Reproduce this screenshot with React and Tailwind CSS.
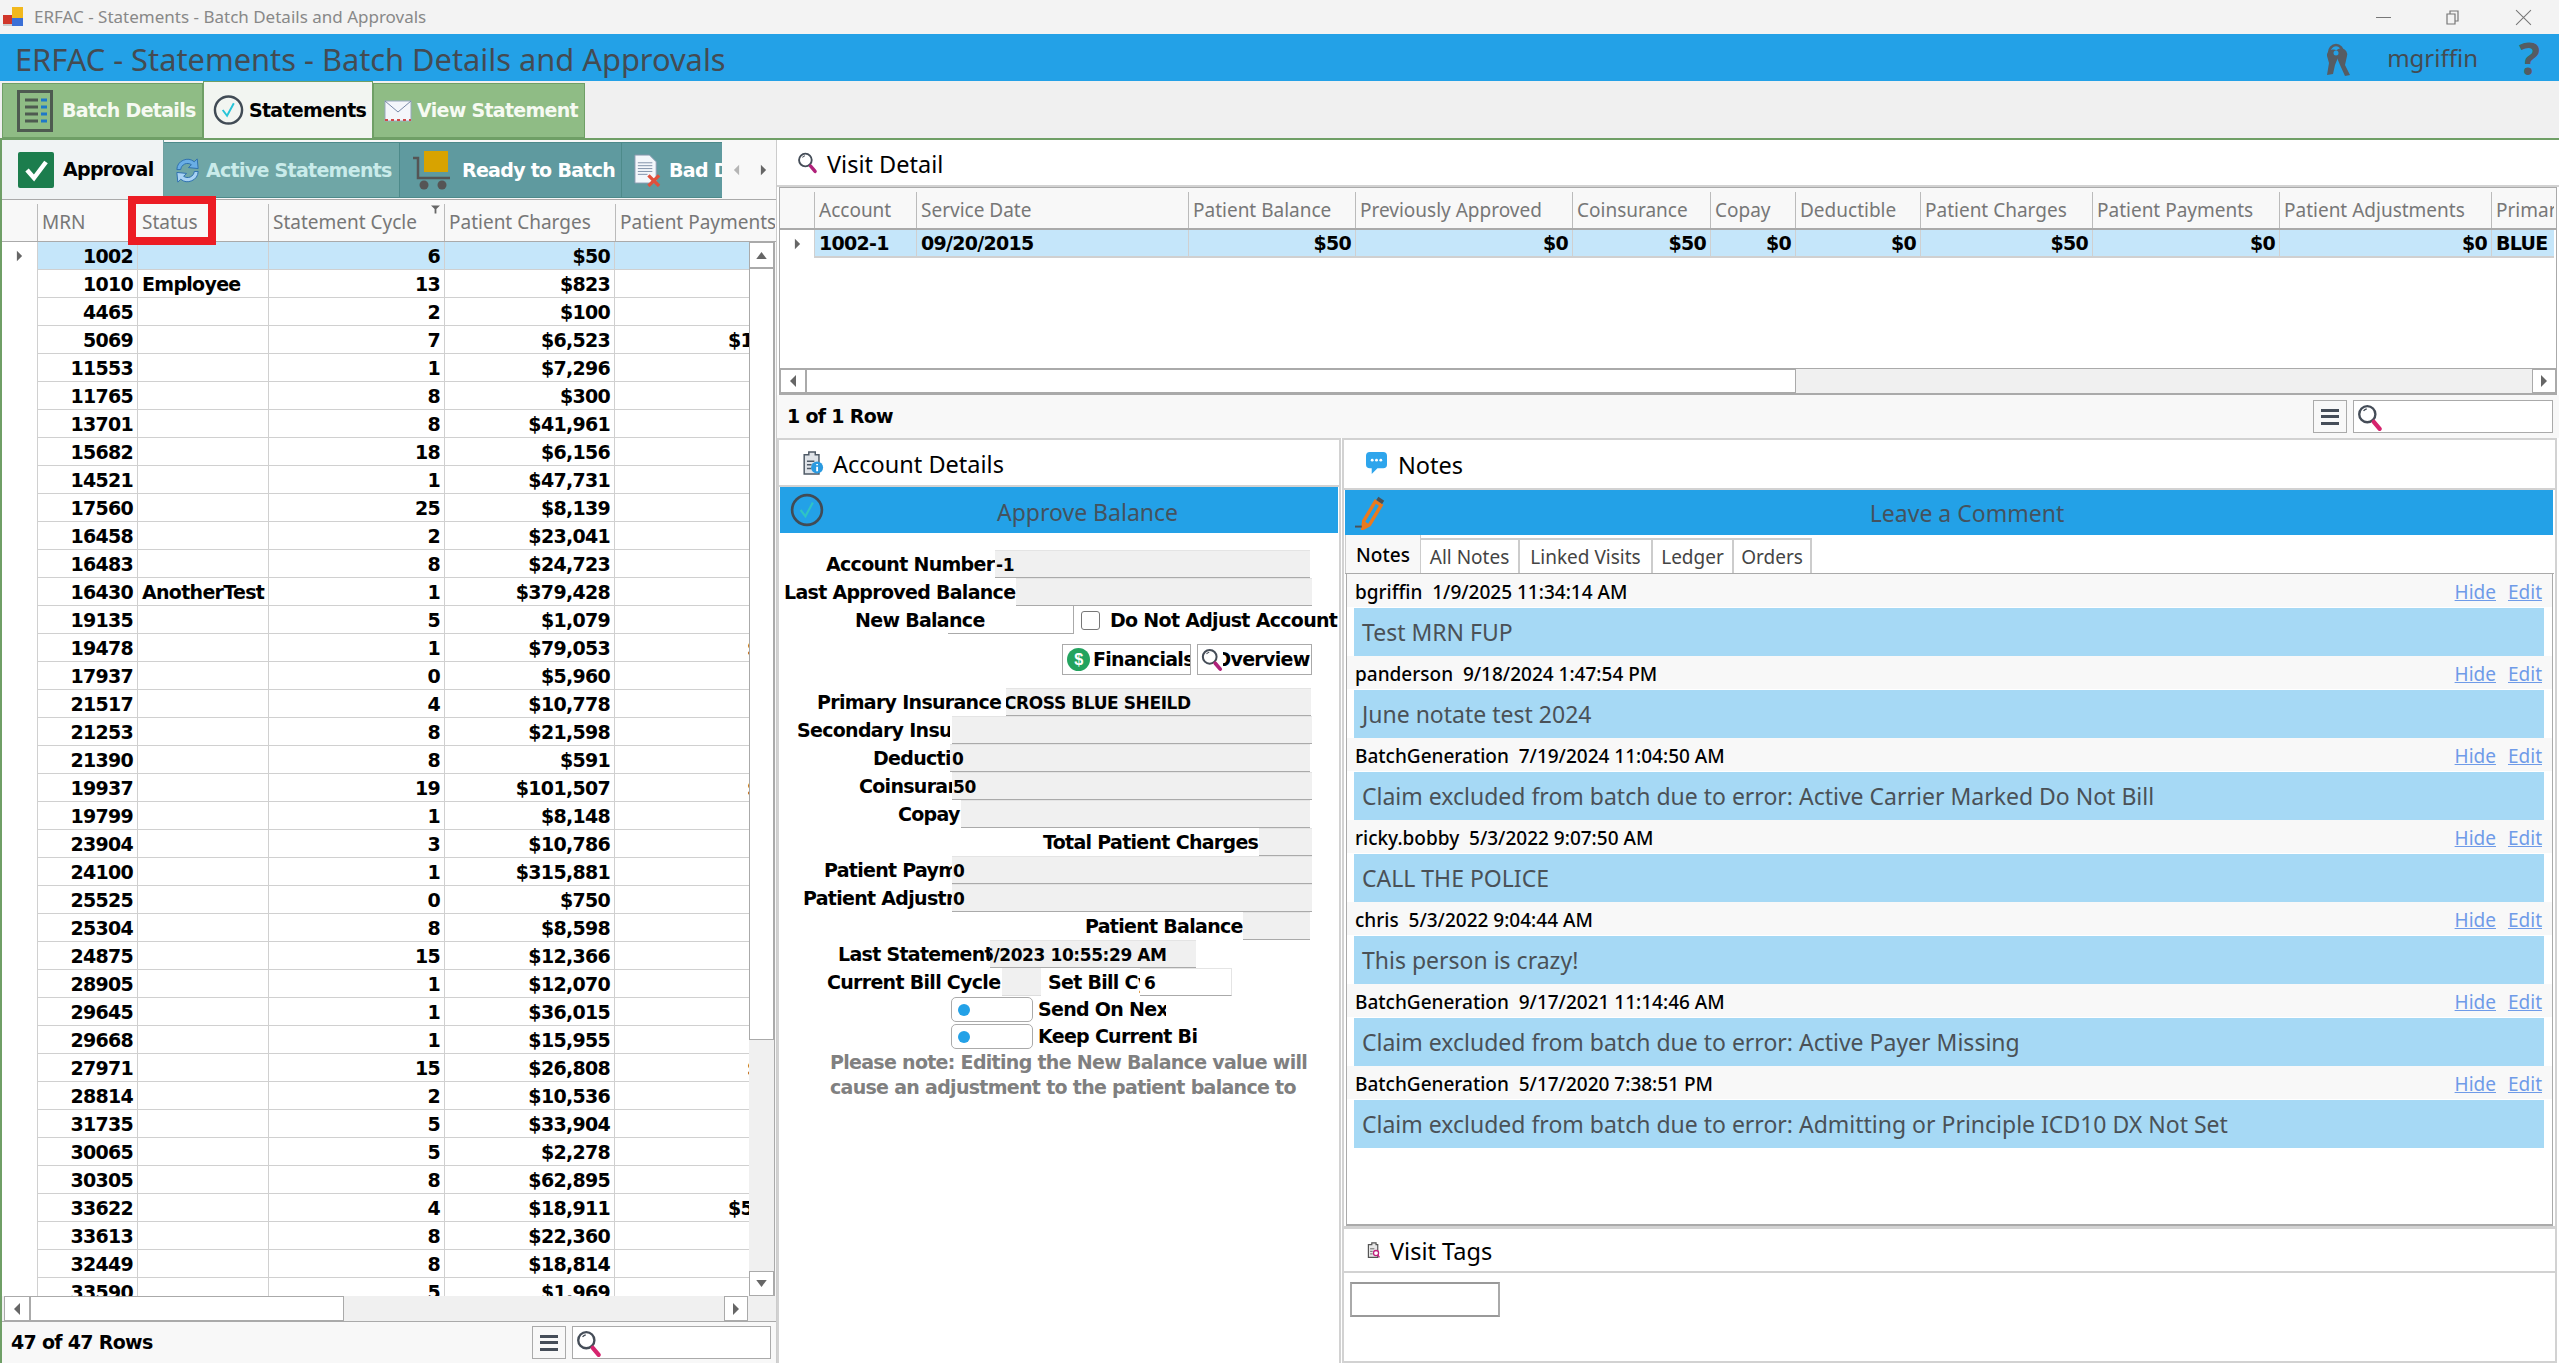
import React from 'react';

const bold = "font-['DejaVu_Sans',sans-serif] font-bold text-[19px] tracking-[-0.7px]";

const rows = [
  ['1002', '', '6', '$50', ''],
  ['1010', 'Employee', '13', '$823', ''],
  ['4465', '', '2', '$100', ''],
  ['5069', '', '7', '$6,523', '$1,240'],
  ['11553', '', '1', '$7,296', ''],
  ['11765', '', '8', '$300', ''],
  ['13701', '', '8', '$41,961', ''],
  ['15682', '', '18', '$6,156', ''],
  ['14521', '', '1', '$47,731', ''],
  ['17560', '', '25', '$8,139', ''],
  ['16458', '', '2', '$23,041', ''],
  ['16483', '', '8', '$24,723', ''],
  ['16430', 'AnotherTest', '1', '$379,428', ''],
  ['19135', '', '5', '$1,079', ''],
  ['19478', '', '1', '$79,053', '$794'],
  ['17937', '', '0', '$5,960', ''],
  ['21517', '', '4', '$10,778', ''],
  ['21253', '', '8', '$21,598', ''],
  ['21390', '', '8', '$591', ''],
  ['19937', '', '19', '$101,507', '$612'],
  ['19799', '', '1', '$8,148', ''],
  ['23904', '', '3', '$10,786', ''],
  ['24100', '', '1', '$315,881', ''],
  ['25525', '', '0', '$750', ''],
  ['25304', '', '8', '$8,598', ''],
  ['24875', '', '15', '$12,366', ''],
  ['28905', '', '1', '$12,070', ''],
  ['29645', '', '1', '$36,015', ''],
  ['29668', '', '1', '$15,955', ''],
  ['27971', '', '15', '$26,808', '$350'],
  ['28814', '', '2', '$10,536', ''],
  ['31735', '', '5', '$33,904', ''],
  ['30065', '', '5', '$2,278', ''],
  ['30305', '', '8', '$62,895', ''],
  ['33622', '', '4', '$18,911', '$5,120'],
  ['33613', '', '8', '$22,360', ''],
  ['32449', '', '8', '$18,814', ''],
  ['33590', '', '5', '$1,969', ''],
];

const visitCols = [
  ['Account', '1002-1', 'w-[102px]', 'text-left'],
  ['Service Date', '09/20/2015', 'w-[272px]', 'text-left'],
  ['Patient Balance', '$50', 'w-[167px]', 'text-right'],
  ['Previously Approved', '$0', 'w-[217px]', 'text-right'],
  ['Coinsurance', '$50', 'w-[138px]', 'text-right'],
  ['Copay', '$0', 'w-[85px]', 'text-right'],
  ['Deductible', '$0', 'w-[125px]', 'text-right'],
  ['Patient Charges', '$50', 'w-[172px]', 'text-right'],
  ['Patient Payments', '$0', 'w-[187px]', 'text-right'],
  ['Patient Adjustments', '$0', 'w-[212px]', 'text-right'],
  ['Primary', 'BLUE', 'w-[63px]', 'text-left'],
];

const notes = [
  ['bgriffin', '1/9/2025 11:34:14 AM', 'Test MRN FUP'],
  ['panderson', '9/18/2024 1:47:54 PM', 'June notate test 2024'],
  ['BatchGeneration', '7/19/2024 11:04:50 AM', 'Claim excluded from batch due to error: Active Carrier Marked Do Not Bill'],
  ['ricky.bobby', '5/3/2022 9:07:50 AM', 'CALL THE POLICE'],
  ['chris', '5/3/2022 9:04:44 AM', 'This person is crazy!'],
  ['BatchGeneration', '9/17/2021 11:14:46 AM', 'Claim excluded from batch due to error: Active Payer Missing'],
  ['BatchGeneration', '5/17/2020 7:38:51 PM', 'Claim excluded from batch due to error: Admitting or Principle ICD10 DX Not Set'],
];

const noteTabs = [
  ['All Notes', 'w-[99px]'],
  ['Linked Visits', 'w-[133px]'],
  ['Ledger', 'w-[81px]'],
  ['Orders', 'w-[78px]'],
];

// little triangle used by the scrollbars and row headers
function Arrow({ dir, className = 'w-[8px] h-[12px]' }) {
  const d = {
    left: 'M7 0 V12 L1 6 Z',
    right: 'M1 0 V12 L7 6 Z',
  };
  if (dir === 'up' || dir === 'down') {
    return (
      <svg viewBox="0 0 12 8" className="w-[11px] h-[7px]">
        <path d={dir === 'up' ? 'M0 8 H12 L6 0 Z' : 'M0 0 H12 L6 8 Z'} fill="#666" />
      </svg>
    );
  }
  return (
    <svg viewBox="0 0 8 12" className={className}>
      <path d={d[dir]} fill="#666" />
    </svg>
  );
}

function Magnifier({ className, handle = '#d6246e' }) {
  return (
    <svg viewBox="0 0 24 26" className={className}>
      <circle cx="9.5" cy="9.5" r="7.5" fill="#fff" stroke="#454d58" strokeWidth="2.2" />
      <path d="M6 6.5 A5 5 0 0 1 9 4.5" fill="none" stroke="#454d58" strokeWidth="1.2" />
      <path d="M15.5 16.5 L21 23" stroke={handle} strokeWidth="4" strokeLinecap="round" />
    </svg>
  );
}

function CheckCircle({ className, stroke = '#414b55', check = '#27c4d8', fill = 'none' }) {
  return (
    <svg viewBox="0 0 32 32" className={className}>
      <circle cx="16" cy="16" r="14" fill={fill} stroke={stroke} strokeWidth="2.5" />
      <path d="M10 16 L14.5 22 L21.5 9" fill="none" stroke={check} strokeWidth="2" />
    </svg>
  );
}

function MenuBox({ search }) {
  return (
    <div className="flex gap-[6px] items-stretch h-full">
      <div className="w-[34px] border border-[#aaa] flex flex-col items-center justify-center gap-[3.5px] bg-[#f8f8f8]">
        <div className="w-[18px] h-[3px] bg-[#454d58]" />
        <div className="w-[18px] h-[3px] bg-[#454d58]" />
        <div className="w-[18px] h-[3px] bg-[#454d58]" />
      </div>
      <div className={`${search} border border-[#aaa] bg-white pl-[3px] pt-[3px]`}>
        <Magnifier className="w-[26px] h-[28px]" />
      </div>
    </div>
  );
}

function ScrollH({ thumbClass, className }) {
  return (
    <div className={`flex items-stretch bg-[#f0f0f0] ${className}`}>
      <div className="w-[26px] bg-white border border-[#aaa] flex items-center justify-center"><Arrow dir="left" /></div>
      <div className={`${thumbClass} bg-white border border-[#aaa]`} />
      <div className="flex-1" />
      <div className="w-[24px] bg-white border border-[#aaa] flex items-center justify-center"><Arrow dir="right" /></div>
    </div>
  );
}

function SectionTitle({ icon, children, className = '' }) {
  return (
    <div className={`flex items-center bg-white text-[23.5px] text-black border-b-2 border-[#d2d2d2] pt-[4px] ${className}`}>
      {icon}
      <span>{children}</span>
    </div>
  );
}

function Grid() {
  return (
    <div className="flex-1 flex flex-col min-h-0 relative">
      <div className="h-[43px] pt-[4px] flex bg-[#f8f8f8] border-y border-[#aaa] text-[19px] text-[#777] whitespace-nowrap overflow-hidden shrink-0">
        <div className="w-[35px] shrink-0" />
        <div className="w-[100px] shrink-0 border-l border-[#bbb] pl-[4px] flex items-center">MRN</div>
        <div className="w-[131px] shrink-0 pl-[5px] flex items-center">Status</div>
        <div className="w-[176px] shrink-0 border-l border-[#bbb] pl-[4px] flex items-center relative">
          Statement Cycle
          <svg viewBox="0 0 10 9" className="absolute right-[4px] top-[1px] w-[9px] h-[9px]">
            <path d="M0 0 H10 L6 4 V9 H4 V4 Z" fill="#666" />
          </svg>
        </div>
        <div className="w-[171px] shrink-0 border-l border-[#bbb] pl-[4px] flex items-center">Patient Charges</div>
        <div className="w-[160px] shrink-0 border-l border-[#bbb] pl-[4px] flex items-center overflow-hidden">Patient Payments</div>
      </div>

      <div className="absolute left-[126px] top-[-3px] w-[88px] h-[49px] border-[8px] border-[#ec1c24]" />

      <div className="flex-1 flex min-h-0">
        <div className={`w-[747px] overflow-hidden text-black ${bold}`}>
          {rows.map((r, i) => (
            <div key={r[0]} className="flex h-[28px] leading-[28px] whitespace-nowrap">
              <div className="w-[35px] shrink-0 flex items-center justify-center bg-white">
                {i === 0 && <Arrow dir="right" className="w-[7px] h-[14px]" />}
              </div>
              <div className={`flex shrink-0 border-b border-l border-[#d0d0d0] ${i === 0 ? 'bg-[#c5e6fa]' : 'bg-white'}`}>
                <div className="w-[100px] text-right pr-[4px] border-r border-[#d0d0d0]">{r[0]}</div>
                <div className="w-[131px] pl-[4px] border-r border-[#d0d0d0]">{r[1]}</div>
                <div className="w-[176px] text-right pr-[4px] border-r border-[#d0d0d0]">{r[2]}</div>
                <div className="w-[170px] text-right pr-[4px] border-r border-[#d0d0d0]">{r[3]}</div>
                <div className="w-[186px] text-right pr-[4px]">{r[4]}</div>
              </div>
            </div>
          ))}
        </div>
        <div className="w-[26px] shrink-0 flex flex-col bg-[#f0f0f0] border-r border-[#aaa]">
          <div className="h-[26px] bg-white border border-[#aaa] flex items-center justify-center"><Arrow dir="up" /></div>
          <div className="h-[772px] bg-white border border-[#aaa]" />
          <div className="flex-1" />
          <div className="h-[25px] bg-white border border-[#aaa] flex items-center justify-center"><Arrow dir="down" /></div>
        </div>
      </div>
      <ScrollH thumbClass="w-[314px]" className="h-[26px] shrink-0 pl-[2px] pr-[28px] border-b border-[#aaa]" />
    </div>
  );
}

function LeftPanel() {
  return (
    <div className="w-[776px] shrink-0 flex flex-col border-l-2 border-[#6f9f66] bg-[#f8f8f8]">
      <div className="h-[59px] shrink-0 flex items-stretch">
        <div className={`w-[720px] flex overflow-hidden whitespace-nowrap ${bold}`}>
          <div className="w-[162px] shrink-0 flex items-center bg-[#f0f3f4] border-r border-[#6f9f9f] text-black pl-[16px] gap-[9px]">
            <svg viewBox="0 0 36 36" className="w-[36px] h-[36px]">
              <rect width="36" height="36" rx="2" fill="#1c7d4d" />
              <path d="M9 18 L16 26 L28 10" fill="none" stroke="#fff" strokeWidth="4.5" />
            </svg>
            <span>Approval</span>
          </div>
          <div className="w-[236px] shrink-0 mt-[2px] mb-[1px] flex items-center bg-[#6fa6a6] border-y border-r border-[#4d8a8a] text-[#c9ebea] pl-[8px] gap-[3px]">
            <svg viewBox="0 0 32 32" className="w-[31px] h-[31px]">
              <path d="M5 15 A11 11 0 0 1 23 7 L26 4 L27 14 L17 13 L20 10 A7 7 0 0 0 9 15 Z" fill="#6aaee6" stroke="#2d6fae" strokeWidth="1" />
              <path d="M27 17 A11 11 0 0 1 9 25 L6 28 L5 18 L15 19 L12 22 A7 7 0 0 0 23 17 Z" fill="#a8d2f4" stroke="#2d6fae" strokeWidth="1" />
            </svg>
            <span>Active Statements</span>
          </div>
          <div className="w-[222px] shrink-0 mt-[2px] mb-[1px] flex items-center bg-[#5f9a9f] border-y border-r border-[#4d8a8a] text-white pl-[12px] gap-[10px]">
            <svg viewBox="0 0 40 40" className="w-[40px] h-[40px]">
              <rect x="12" y="1" width="24" height="21" fill="#d8a300" />
              <path d="M1 8 H6 V28 H38" fill="none" stroke="#555" strokeWidth="2.5" />
              <circle cx="12" cy="35" r="4.5" fill="#555" />
              <circle cx="30" cy="35" r="4.5" fill="#555" />
            </svg>
            <span>Ready to Batch</span>
          </div>
          <div className="w-[100px] shrink-0 mt-[2px] mb-[1px] flex items-center bg-[#5f9a9f] border-y border-[#4d8a8a] text-white pl-[12px] gap-[8px]">
            <svg viewBox="0 0 28 34" className="w-[27px] h-[33px] shrink-0">
              <path d="M1 1 H16 L23 8 V30 H1 Z" fill="#f4f7fb" stroke="#8a9ab0" />
              <path d="M4 9 H19 M4 12 H19 M4 15 H19 M4 18 H19 M4 21 H14" stroke="#8090a8" strokeWidth="1" />
              <path d="M15 22 L26 33 M26 22 L15 33" stroke="#e0503c" strokeWidth="3.5" />
            </svg>
            <span>Bad Debt</span>
          </div>
        </div>
        <div className="flex-1 flex items-center bg-[#f8f8f8] pl-[11px] gap-[20px]">
          <svg viewBox="0 0 8 12" className="w-[7px] h-[14px]"><path d="M7 0 V12 L1 6 Z" fill="#b5b5b5" /></svg>
          <Arrow dir="right" className="w-[7px] h-[14px]" />
        </div>
      </div>
      <Grid />
      <div className="h-[41px] shrink-0 flex items-center justify-between pl-[9px] pr-[5px] py-[4px] bg-[#f8f8f8]">
        <span className={`text-black ${bold}`}>47 of 47 Rows</span>
        <MenuBox search="w-[199px]" />
      </div>
    </div>
  );
}

function VisitDetail() {
  return (
    <>
      <SectionTitle
        className="h-[47px] shrink-0 pl-[20px] gap-[9px]"
        icon={<Magnifier className="w-[21px] h-[22px] -mt-[3px]" handle="#b0217a" />}
      >
        Visit Detail
      </SectionTitle>
      <div className="h-[208px] shrink-0 flex flex-col mx-[2px] border border-[#aaa] border-b-2">
        <div className="h-[42px] pt-[4px] shrink-0 flex bg-[#f8f8f8] border-b-2 border-[#aaa] text-[19px] text-[#777] whitespace-nowrap">
          <div className="w-[34px] shrink-0" />
          {visitCols.map(c => (
            <div key={c[0]} className={`${c[2]} shrink-0 border-l border-[#bbb] pl-[4px] flex items-center overflow-hidden`}>{c[0]}</div>
          ))}
        </div>
        <div className={`h-[28px] shrink-0 flex text-black leading-[27px] whitespace-nowrap ${bold}`}>
          <div className="w-[34px] shrink-0 flex items-center justify-center bg-white">
            <Arrow dir="right" className="w-[7px] h-[14px]" />
          </div>
          {visitCols.map(c => (
            <div key={c[0]} className={`${c[2]} ${c[3]} shrink-0 bg-[#c5e6fa] border-l border-b-2 border-[#d0d0d0] px-[4px]`}>{c[1]}</div>
          ))}
        </div>
        <div className="flex-1 bg-white" />
        <ScrollH thumbClass="w-[990px]" className="h-[25px] shrink-0 border-t border-[#aaa]" />
      </div>
      <div className="h-[43px] shrink-0 flex items-center justify-between pl-[10px] pr-[6px] py-[5px] bg-[#f8f8f8]">
        <span className={`text-black ${bold}`}>1 of 1 Row</span>
        <MenuBox search="w-[200px]" />
      </div>
    </>
  );
}

function FormRow({ label, labelClass, fieldClass, value }) {
  return (
    <div className={`h-[28px] flex items-stretch whitespace-nowrap text-black leading-[28px] ${bold}`}>
      <div className={`relative z-10 bg-white overflow-hidden shrink-0 ${labelClass}`}>{label}</div>
      <div className={`shrink-0 bg-[#f0f0f0] border-b border-[#aaa] border-t border-t-[#e4e4e4] overflow-hidden text-[17px] tracking-[-0.4px] ${fieldClass}`}>
        {value}
      </div>
    </div>
  );
}

function AccountDetails() {
  return (
    <div className="w-[564px] shrink-0 flex flex-col border-t-2 border-x-2 border-[#d2d2d2] bg-white">
      <SectionTitle
        className="h-[47px] shrink-0 pl-[22px] gap-[9px]"
        icon={
          <svg viewBox="0 0 24 26" className="w-[23px] h-[24px] -mt-[3px]">
            <path d="M3 4 H8 V1 H15 V4 H19 V25 H3 Z" fill="#dfe3e8" stroke="#4f5a66" strokeWidth="1.6" />
            <path d="M6 11 H14 M6 15 H11 M6 19 H11" stroke="#4f5a66" strokeWidth="1.6" />
            <circle cx="17" cy="18" r="6.5" fill="#2a9ae0" />
            <path d="M17 17 V22 M17 14 V15.5" stroke="#fff" strokeWidth="2" />
          </svg>
        }
      >
        Account Details
      </SectionTitle>
      <div className="h-[46px] shrink-0 bg-[#23a1e7] flex items-center pl-[10px] pt-[4px] text-[23px] text-[#44525e] mx-[1px]">
        <CheckCircle className="w-[34px] h-[34px] shrink-0 -mt-[4px]" stroke="#414b55" check="#2fc4c4" />
        <span className="ml-[173px]">Approve Balance</span>
      </div>

      <div className="pt-[17px] flex flex-col">
        <FormRow label="Account Number" labelClass="w-[216px] pl-[47px]" fieldClass="ml-[-47px] w-[362px] pl-[48px]" value="-1" />
        <FormRow label="Last Approved Balance" labelClass="w-[237px] pl-[5px]" fieldClass="ml-[-66px] w-[362px]" value="" />
        <div className={`h-[28px] flex items-center whitespace-nowrap text-black ${bold}`}>
          <div className="w-[169px] pl-[76px] shrink-0">New Balance</div>
          <div className="w-[126px] h-full border-b border-r border-[#aaa] shrink-0" />
          <div className="w-[19px] h-[19px] ml-[7px] border border-[#777] rounded-[3px] shrink-0" />
          <div className="ml-[10px] w-[229px] overflow-hidden">Do Not Adjust Account</div>
        </div>
        <div className={`h-[31px] mt-[10px] mb-[13px] flex pl-[283px] gap-[6px] text-black whitespace-nowrap ${bold}`}>
          <div className="w-[129px] border border-[#aaa] flex items-center pl-[4px] gap-[3px] overflow-hidden">
            <svg viewBox="0 0 24 24" className="w-[23px] h-[23px] shrink-0">
              <circle cx="12" cy="12" r="12" fill="#23a35f" />
              <text x="12" y="18" textAnchor="middle" fontSize="17" fontWeight="700" fill="#fff" fontFamily="Liberation Sans">$</text>
            </svg>
            <span>Financials</span>
          </div>
          <div className="w-[115px] border border-[#aaa] flex items-center pl-[3px] overflow-hidden">
            <Magnifier className="w-[22px] h-[24px] shrink-0 relative z-10 bg-white" handle="#b0217a" />
            <span className="ml-[-8px]">Overview</span>
          </div>
        </div>
        <FormRow label="Primary Insurance" labelClass="w-[227px] pl-[38px]" fieldClass="ml-[-56px] w-[361px] pl-[54px]" value="CROSS BLUE SHEILD" />
        <FormRow label="Secondary Insurance" labelClass="w-[171px] pl-[18px]" fieldClass="ml-[2px] w-[360px]" value="" />
        <FormRow label="Deductible" labelClass="w-[171px] pl-[94px]" fieldClass="w-[360px] pl-[2px]" value="0" />
        <FormRow label="Coinsurance" labelClass="w-[173px] pl-[80px]" fieldClass="w-[360px] pl-[1px]" value="50" />
        <FormRow label="Copay" labelClass="w-[182px] pl-[119px]" fieldClass="ml-[-11px] w-[360px]" value="" />
        <FormRow label="Total Patient Charges" labelClass="w-[480px] pl-[264px]" fieldClass="ml-[-309px] w-[362px]" value="" />
        <FormRow label="Patient Payments" labelClass="w-[173px] pl-[45px]" fieldClass="w-[360px] pl-[1px]" value="0" />
        <FormRow label="Patient Adjustments" labelClass="w-[173px] pl-[24px]" fieldClass="w-[360px] pl-[1px]" value="0" />
        <FormRow label="Patient Balance" labelClass="w-[464px] pl-[306px]" fieldClass="ml-[-293px] w-[360px]" value="" />
        <FormRow label="Last Statement Date" labelClass="w-[211px] pl-[59px]" fieldClass="ml-[-40px] w-[246px] pl-[32px]" value="6/2023 10:55:29 AM" />
        <div className={`h-[28px] flex whitespace-nowrap text-black leading-[28px] ${bold}`}>
          <div className="w-[223px] pl-[48px] shrink-0">Current Bill Cycle</div>
          <div className="w-[39px] bg-[#f0f0f0] border-b border-[#ddd] shrink-0" />
          <div className="w-[92px] ml-[7px] overflow-hidden shrink-0">Set Bill Cycle</div>
          <div className="w-[92px] pl-[4px] border-y border-r border-[#e4e4e4] border-b-[#aaa] text-[17px]">6</div>
        </div>
        <div className={`h-[27px] flex items-center whitespace-nowrap text-black pl-[172px] ${bold}`}>
          <div className="w-[82px] h-[25px] rounded-[5px] border border-[#aaa] flex items-center pl-[6px] shrink-0">
            <div className="w-[12px] h-[12px] rounded-full bg-[#23a1e7]" />
          </div>
          <div className="ml-[5px] w-[128px] overflow-hidden">Send On Next</div>
        </div>
        <div className={`h-[27px] flex items-center whitespace-nowrap text-black pl-[172px] ${bold}`}>
          <div className="w-[82px] h-[25px] rounded-[5px] border border-[#aaa] flex items-center pl-[6px] shrink-0">
            <div className="w-[12px] h-[12px] rounded-full bg-[#23a1e7]" />
          </div>
          <div className="ml-[5px] w-[160px] overflow-hidden">Keep Current Bill Cycle</div>
        </div>
        <div className={`pl-[51px] text-[#808080] leading-[24.5px] w-[558px] ${bold}`}>
          Please note: Editing the New Balance value will cause an adjustment to the patient balance to
        </div>
      </div>
    </div>
  );
}

function NoteItem({ note }) {
  return (
    <div className="h-[82px] shrink-0 flex flex-col">
      <div className="h-[33px] pt-[3px] flex items-center justify-between bg-[#f8f8f8] pl-[8px] pr-[10px] text-[19px] whitespace-nowrap">
        <span className="font-medium text-black">{note[0]}&nbsp;&nbsp;{note[1]}</span>
        <span className="flex gap-[12px] text-[#6f9be8] underline">
          <span>Hide</span>
          <span>Edit</span>
        </span>
      </div>
      <div className="h-[48px] mt-[1px] ml-[7px] mr-[8px] bg-[#a6d9f5] flex items-center pl-[8px] text-[23px] text-[#4a5157] whitespace-nowrap">
        {note[2]}
      </div>
    </div>
  );
}

function Notes() {
  return (
    <div className="flex-1 flex flex-col min-w-0 bg-white border-t-2 border-x-2 border-[#d2d2d2] ml-[1px] mr-[2px]">
      <SectionTitle
        className="h-[50px] shrink-0 pl-[22px] gap-[11px]"
        icon={
          <svg viewBox="0 0 22 24" className="w-[21px] h-[23px] -mt-[6px]">
            <path d="M4 0 H18 A4 4 0 0 1 22 4 V13 A4 4 0 0 1 18 17 H12 L6 23 V17 H4 A4 4 0 0 1 0 13 V4 A4 4 0 0 1 4 0 Z" fill="#2ea5ec" />
            <circle cx="6.5" cy="8.5" r="1.5" fill="#fff" />
            <circle cx="11" cy="8.5" r="1.5" fill="#fff" />
            <circle cx="15.5" cy="8.5" r="1.5" fill="#fff" />
          </svg>
        }
      >
        Notes
      </SectionTitle>
      <div className="h-[45px] shrink-0 relative bg-[#23a1e7] flex items-center justify-center pt-[2px] pl-[36px] text-[23px] text-[#44525e] ml-[1px] mr-[2px]">
        <svg viewBox="0 0 34 34" className="absolute left-[10px] top-[6px] w-[33px] h-[34px]">
          <path d="M21 5 L27 9 L15 29 L8 33 L9 25 Z" fill="none" stroke="#ea7a1e" strokeWidth="3.5" />
          <path d="M9 25 L15 29 L8 33 Z" fill="#ea7a1e" />
          <path d="M23 2 L29 6" stroke="#4a5157" strokeWidth="4" />
          <path d="M0 31 H7" stroke="#4a5157" strokeWidth="2" />
        </svg>
        Leave a Comment
      </div>
      <div className="h-[39px] shrink-0 flex text-[19px] whitespace-nowrap border-b border-[#aaa] mx-[1px]">
        <div className="w-[76px] pt-[2px] bg-[#f8f8f8] border-x border-[#ccc] font-medium text-black flex items-center justify-center">Notes</div>
        {noteTabs.map(t => (
          <div key={t[0]} className={`${t[1]} mt-[3px] pt-[1px] border-t-2 border-r-2 border-[#ccc] text-[#444] flex items-center justify-center`}>{t[0]}</div>
        ))}
      </div>
      <div className="h-[652px] shrink-0 mx-[2px] border-x border-b-2 border-[#aaa] flex flex-col overflow-hidden">
        {notes.map((n, i) => <NoteItem key={i} note={n} />)}
      </div>
      <div className="h-[3px] shrink-0 bg-[#d2d2d2]" />
      <SectionTitle
        className="h-[44px] shrink-0 pl-[22px] gap-[9px]"
        icon={
          <svg viewBox="0 0 16 20" className="w-[15px] h-[17px] -mt-[3px]">
            <path d="M2 3 H6 V1 H11 V3 H13 V18 H2 Z" fill="#e8e8e8" stroke="#555" strokeWidth="1.4" />
            <path d="M4 8 H9 M4 11 H7 M4 14 H7" stroke="#555" />
            <circle cx="11" cy="13" r="3" fill="#fff" stroke="#c0207e" strokeWidth="1.5" />
            <path d="M13 15 L15 18" stroke="#c0207e" strokeWidth="1.5" />
          </svg>
        }
      >
        Visit Tags
      </SectionTitle>
      <div className="flex-1 pl-[6px] pt-[9px] border-b-2 border-[#d2d2d2]">
        <div className="w-[150px] h-[35px] border-2 border-[#aaa] border-y-[#999] bg-white" />
      </div>
    </div>
  );
}

export default function App() {
  return (
    <div className="w-[2559px] h-[1363px] flex flex-col overflow-hidden bg-white font-['Noto_Sans',sans-serif]">
      {/* window title */}
      <div className="h-[34px] shrink-0 flex items-center bg-[#f3f3f3] pl-[3px] text-[17px] text-[#888]">
        <svg viewBox="0 0 22 20" className="w-[22px] h-[20px] shrink-0">
          <rect x="0" y="8" width="9" height="9" fill="#d0362a" />
          <rect x="9" y="0" width="11" height="11" fill="#f2b81c" />
          <rect x="9" y="11" width="11" height="8" fill="#3b6fd6" />
          <rect x="0" y="17" width="9" height="2" fill="#ccc" />
        </svg>
        <span className="ml-[9px]">ERFAC - Statements - Batch Details and Approvals</span>
        <div className="ml-auto flex items-center pr-[27px]">
          <div className="w-[15px] h-[1px] bg-[#777]" />
          <svg viewBox="0 0 16 16" className="w-[16px] h-[16px] ml-[53px]" fill="none" stroke="#777" strokeWidth="1.2">
            <path d="M3 5 H11 V15 H3 Z M6 5 V2 H14 V12 H11" />
          </svg>
          <svg viewBox="0 0 16 16" className="w-[17px] h-[17px] ml-[55px]" fill="none" stroke="#777" strokeWidth="1">
            <path d="M1 1 L15 15 M15 1 L1 15" />
          </svg>
        </div>
      </div>

      {/* app header */}
      <div className="h-[47px] shrink-0 flex items-center bg-[#23a1e7] pl-[15px] text-[30.8px] text-[#444b52]">
        <span className="pt-[3px]">ERFAC - Statements - Batch Details and Approvals</span>
        <div className="ml-auto flex items-center pr-[19px]">
          <svg viewBox="0 0 30 38" className="w-[30px] h-[38px]">
            <path d="M8 14 A7 8 0 0 1 22 14" fill="none" stroke="#565c63" strokeWidth="2.5" />
            <path d="M6 36 L8 24 L6 17 A6 6 0 0 1 18 16 L14 26 L12 35 Z" fill="#565c63" />
            <path d="M14 14 A6 6 0 0 1 26 17 L24 26 L29 36 L24 37 L19 26 Z" fill="#565c63" />
            <circle cx="15" cy="14" r="2.5" fill="#23a1e7" />
          </svg>
          <span className="ml-[36px] text-[24px]">mgriffin</span>
          <span className="ml-[41px] text-[44px] leading-none font-bold text-[#555b62]">?</span>
        </div>
      </div>

      {/* main tabs */}
      <div className={`h-[59px] shrink-0 flex bg-[#f0f0f0] border-b-2 border-[#6f9f66] whitespace-nowrap ${bold}`}>
        <div className="w-[201px] ml-[2px] mt-[2px] flex items-center bg-[#8fbc85] border border-[#6f9f66] text-[#f6faf2] pl-[14px] gap-[9px]">
          <svg viewBox="0 0 36 42" className="w-[36px] h-[42px]">
            <rect x="1.5" y="1.5" width="33" height="39" fill="none" stroke="#4e5a50" strokeWidth="3" />
            <path d="M8 10 H21 M8 17 H21 M8 24 H21 M8 31 H21" stroke="#4e5a50" strokeWidth="3" />
            <path d="M24 10 H30 M24 17 H30 M24 24 H30 M24 31 H30" stroke="#1e78c8" strokeWidth="3" />
          </svg>
          <span>Batch Details</span>
        </div>
        <div className="w-[170px] flex items-center bg-[#f2f5f1] border-x border-t border-[#6f9f66] text-black pl-[9px] gap-[5px]">
          <CheckCircle className="w-[31px] h-[32px] shrink-0" />
          <span>Statements</span>
        </div>
        <div className="w-[212px] mt-[2px] flex items-center bg-[#8fbc85] border border-[#6f9f66] text-[#f6faf2] pl-[10px] gap-[5px]">
          <svg viewBox="0 0 28 22" className="w-[28px] h-[22px] shrink-0">
            <rect x="1" y="1" width="26" height="20" fill="#f4f6fb" stroke="#9aa8c0" />
            <path d="M1 1 L14 12 L27 1" fill="none" stroke="#7a8aa8" />
            <path d="M1 20 H27" stroke="#d04a4a" strokeWidth="2" strokeDasharray="3 3" />
          </svg>
          <span>View Statement</span>
        </div>
      </div>

      {/* content */}
      <div className="flex-1 flex min-h-0">
        <LeftPanel />
        <div className="flex-1 min-w-0 flex flex-col bg-white border-l border-[#ccc]">
          <VisitDetail />
          <div className="flex-1 flex min-h-0">
            <AccountDetails />
            <Notes />
          </div>
        </div>
      </div>
    </div>
  );
}
